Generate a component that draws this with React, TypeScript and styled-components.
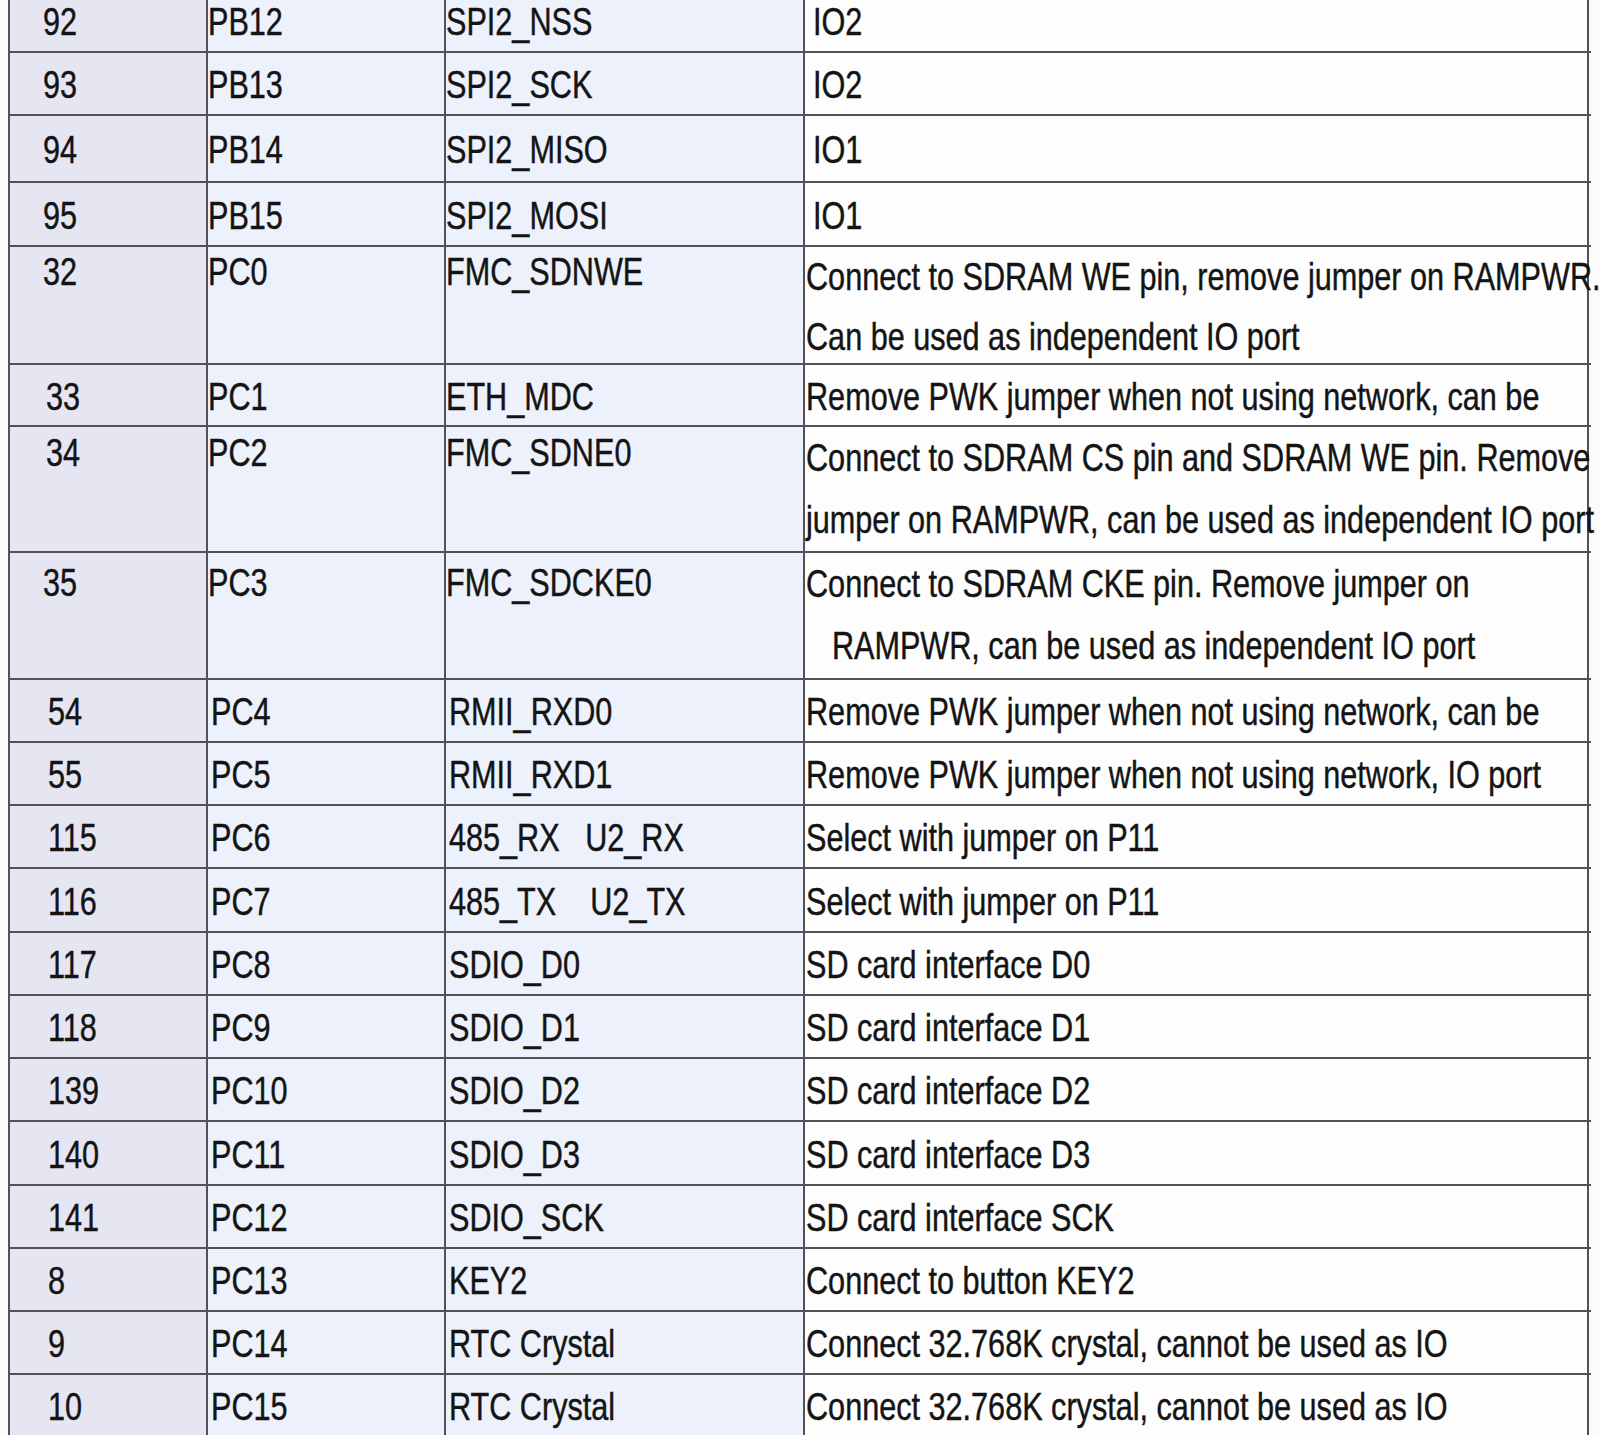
import React from "react";
import styled, { createGlobalStyle } from "styled-components";

const Global = createGlobalStyle`
  html, body { margin: 0; padding: 0; background: #fbfbfb; }
  body {
    padding-left: 8px;
    overflow: hidden;
    height: 1435px;
    font-family: "Liberation Sans", Arial, sans-serif;
    color: #141414;
  }
`;

const COLS = "198px 238px 359px 784px";

const Table = styled.div`
  width: 1581px;
  margin-top: -10px;
  border-left: 2px solid #525252;
  display: flex;
  flex-direction: column;
`;

const Row = styled.div<{ $h: number }>`
  display: grid;
  grid-template-columns: ${COLS};
  grid-template-rows: minmax(0, 1fr);
  height: ${(p) => p.$h}px;
  flex: none;
  border-bottom: 2px solid #525252;
  box-sizing: border-box;
`;

const Cell = styled.div<{ $bg: string; $pad: number; $top?: boolean; $pt?: number }>`
  background: ${(p) => p.$bg};
  border-right: 2px solid #525252;
  box-sizing: border-box;
  padding-left: ${(p) => p.$pad}px;
  padding-top: ${(p) => p.$pt ?? 0}px;
  display: flex;
  flex-direction: column;
  justify-content: ${(p) => (p.$top ? "flex-start" : "center")};
  overflow: visible;
  min-width: 0;
  min-height: 0;
`;

const Text = styled.span<{ $indent?: number; $lh?: number }>`
  display: block;
  font-size: 39px;
  line-height: ${(p) => p.$lh ?? 44}px;
  white-space: pre;
  transform: scaleX(0.785);
  transform-origin: left center;
  padding-left: ${(p) => p.$indent ?? 0}px;
  -webkit-text-stroke: 0.45px #141414;
`;

type Line = string | { t: string; indent: number };

interface Pin {
  n: string;
  port: string;
  fn: string;
  desc: Line[];
  h: number;
  np: number;
  sp: number;
  dp: number;
  pt?: number;
  lh?: number;
}

const rows: Pin[] = [
  { n: "92", port: "PB12", fn: "SPI2_NSS", desc: ["IO2"], h: 63, np: 33, sp: 0, dp: 8 },
  { n: "93", port: "PB13", fn: "SPI2_SCK", desc: ["IO2"], h: 63, np: 33, sp: 0, dp: 8 },
  { n: "94", port: "PB14", fn: "SPI2_MISO", desc: ["IO1"], h: 67, np: 33, sp: 0, dp: 8 },
  { n: "95", port: "PB15", fn: "SPI2_MOSI", desc: ["IO1"], h: 64, np: 33, sp: 0, dp: 8 },
  {
    n: "32",
    port: "PC0",
    fn: "FMC_SDNWE",
    desc: ["Connect to SDRAM WE pin, remove jumper on RAMPWR.", "Can be used as independent IO port"],
    h: 118,
    np: 33,
    sp: 0,
    dp: 1,
    pt: 3,
    lh: 60,
  },
  { n: "33", port: "PC1", fn: "ETH_MDC", desc: ["Remove PWK jumper when not using network, can be"], h: 62, np: 36, sp: 0, dp: 1 },
  {
    n: "34",
    port: "PC2",
    fn: "FMC_SDNE0",
    desc: ["Connect to SDRAM CS pin and SDRAM WE pin. Remove", "jumper on RAMPWR, can be used as independent IO port"],
    h: 126,
    np: 36,
    sp: 0,
    dp: 1,
    pt: 4,
    lh: 62,
  },
  {
    n: "35",
    port: "PC3",
    fn: "FMC_SDCKE0",
    desc: ["Connect to SDRAM CKE pin. Remove jumper on", { t: "RAMPWR, can be used as independent IO port", indent: 33 }],
    h: 127,
    np: 33,
    sp: 0,
    dp: 1,
    pt: 8,
    lh: 62,
  },
  { n: "54", port: "PC4", fn: "RMII_RXD0", desc: ["Remove PWK jumper when not using network, can be"], h: 63, np: 38, sp: 3, dp: 1 },
  { n: "55", port: "PC5", fn: "RMII_RXD1", desc: ["Remove PWK jumper when not using network, IO port"], h: 63, np: 38, sp: 3, dp: 1 },
  { n: "115", port: "PC6", fn: "485_RX\u00a0\u00a0\u00a0U2_RX", desc: ["Select with jumper on P11"], h: 63, np: 38, sp: 3, dp: 1 },
  { n: "116", port: "PC7", fn: "485_TX\u00a0\u00a0\u00a0\u00a0U2_TX", desc: ["Select with jumper on P11"], h: 64, np: 38, sp: 3, dp: 1 },
  { n: "117", port: "PC8", fn: "SDIO_D0", desc: ["SD card interface D0"], h: 63, np: 38, sp: 3, dp: 1 },
  { n: "118", port: "PC9", fn: "SDIO_D1", desc: ["SD card interface D1"], h: 63, np: 38, sp: 3, dp: 1 },
  { n: "139", port: "PC10", fn: "SDIO_D2", desc: ["SD card interface D2"], h: 63, np: 38, sp: 3, dp: 1 },
  { n: "140", port: "PC11", fn: "SDIO_D3", desc: ["SD card interface D3"], h: 64, np: 38, sp: 3, dp: 1 },
  { n: "141", port: "PC12", fn: "SDIO_SCK", desc: ["SD card interface SCK"], h: 63, np: 38, sp: 3, dp: 1 },
  { n: "8", port: "PC13", fn: "KEY2", desc: ["Connect to button KEY2"], h: 63, np: 38, sp: 3, dp: 1 },
  { n: "9", port: "PC14", fn: "RTC Crystal", desc: ["Connect 32.768K crystal, cannot be used as IO"], h: 63, np: 38, sp: 3, dp: 1 },
  { n: "10", port: "PC15", fn: "RTC Crystal", desc: ["Connect 32.768K crystal, cannot be used as IO"], h: 63, np: 38, sp: 3, dp: 1 },
];

const NUM_BG = "#e6e6f3";
const PORT_BG = "#ecf1fb";
const DESC_BG = "#fdfdfd";

export default function App() {
  return (
    <>
      <Global />
      <Table>
        {rows.map((r, i) => {
          const multi = r.desc.length > 1;
          const pt = multi ? r.pt ?? 4 : 3;
          return (
            <Row key={i} $h={r.h}>
              <Cell $bg={NUM_BG} $pad={r.np} $top={multi} $pt={pt}>
                <Text>{r.n}</Text>
              </Cell>
              <Cell $bg={PORT_BG} $pad={r.sp} $top={multi} $pt={pt}>
                <Text>{r.port}</Text>
              </Cell>
              <Cell $bg={PORT_BG} $pad={r.sp} $top={multi} $pt={pt}>
                <Text>{r.fn}</Text>
              </Cell>
              <Cell $bg={DESC_BG} $pad={r.dp} $top={multi} $pt={multi ? 0 : 3}>
                {r.desc.map((l, j) =>
                  typeof l === "string" ? (
                    <Text key={j} $lh={r.lh ?? 44}>
                      {l}
                    </Text>
                  ) : (
                    <Text key={j} $lh={r.lh ?? 62} $indent={l.indent}>
                      {l.t}
                    </Text>
                  )
                )}
              </Cell>
            </Row>
          );
        })}
      </Table>
    </>
  );
}
